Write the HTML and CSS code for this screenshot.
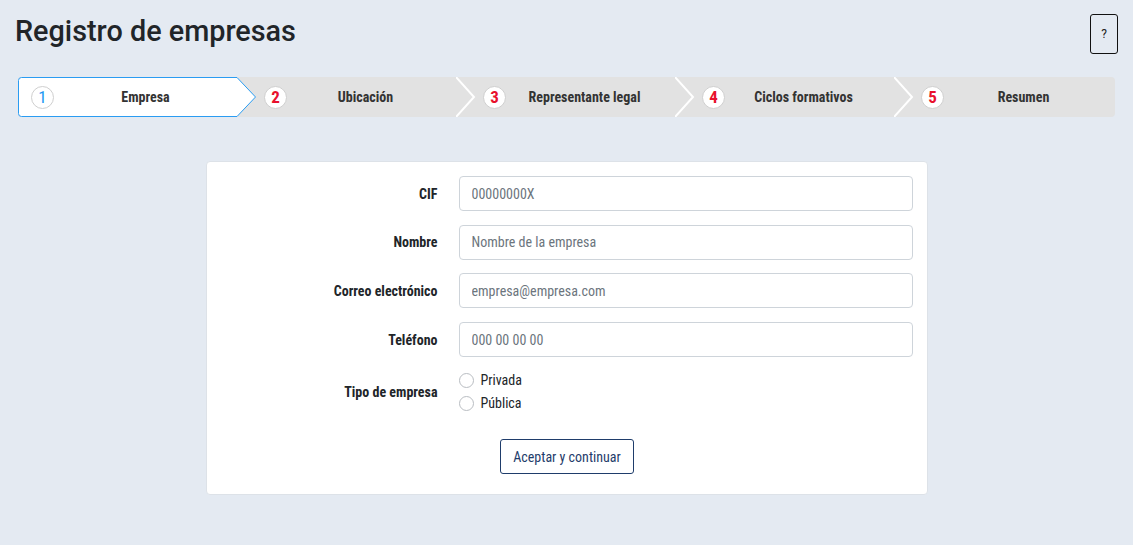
FILE: index.html
```html
<!DOCTYPE html>
<html lang="es">
<head>
<meta charset="utf-8">
<title>Registro de empresas</title>
<link rel="stylesheet" href="styles.css">
</head>
<body>
<header class="page-header">
  <h1 class="title">Registro de empresas</h1>
  <button class="help-btn" type="button">?</button>
</header>

<ol class="steps">
  <li class="step step-active">
    <svg class="step-shape" width="240" height="40" aria-hidden="true"><path d="M3.5 0.5 H219 L237.5 20 L219 39.5 H3.5 Q0.5 39.5 0.5 36.5 V3.5 Q0.5 0.5 3.5 0.5 Z" fill="#fff" stroke="#2a9cf2" stroke-width="1"/></svg>
    <span class="num">1</span><span class="step-label">Empresa</span>
  </li>
  <li class="step">
    <span class="num">2</span><span class="step-label">Ubicación</span>
    <svg class="chev" width="20" height="40" aria-hidden="true"><polyline points="0,0 18,20 0,40" fill="none" stroke="#fff" stroke-width="2"/></svg>
  </li>
  <li class="step">
    <span class="num">3</span><span class="step-label">Representante legal</span>
    <svg class="chev" width="20" height="40" aria-hidden="true"><polyline points="0,0 18,20 0,40" fill="none" stroke="#fff" stroke-width="2"/></svg>
  </li>
  <li class="step">
    <span class="num">4</span><span class="step-label">Ciclos formativos</span>
    <svg class="chev" width="20" height="40" aria-hidden="true"><polyline points="0,0 18,20 0,40" fill="none" stroke="#fff" stroke-width="2"/></svg>
  </li>
  <li class="step step-last">
    <span class="num">5</span><span class="step-label">Resumen</span>
  </li>
</ol>

<main class="card">
  <form class="form">
    <label class="f-label" for="cif">CIF</label>
    <input class="f-input" id="cif" type="text" placeholder="00000000X">

    <label class="f-label" for="nombre">Nombre</label>
    <input class="f-input" id="nombre" type="text" placeholder="Nombre de la empresa">

    <label class="f-label" for="correo">Correo electrónico</label>
    <input class="f-input" id="correo" type="email" placeholder="empresa@empresa.com">

    <label class="f-label" for="tel">Teléfono</label>
    <input class="f-input" id="tel" type="text" placeholder="000 00 00 00">

    <span class="f-label">Tipo de empresa</span>
    <div class="radios">
      <label class="radio"><span class="radio-dot"></span>Privada</label>
      <label class="radio"><span class="radio-dot"></span>Pública</label>
    </div>

    <div class="actions">
      <button class="btn" type="button">Aceptar y continuar</button>
    </div>
  </form>
</main>
</body>
</html>
```

FILE: styles.css
```css
* { box-sizing: border-box; }

html, body {
  margin: 0;
  padding: 0;
  background: #e4eaf2;
}

body {
  font-family: Roboto, "Liberation Sans", sans-serif;
  color: #212529;
  font-stretch: condensed;
}

.page-header {
  display: flex;
  justify-content: space-between;
  align-items: flex-start;
  padding: 14px 15px 0 15px;
}

.title {
  margin: 0;
  font-size: 28.8px;
  line-height: 35px;
  font-weight: 500;
  font-stretch: normal;
  color: #212529;
}

.help-btn {
  width: 28px;
  height: 40px;
  padding: 0;
  border: 1px solid #111;
  border-radius: 3px;
  background: #e4eaf2;
  font-family: Roboto, sans-serif;
  font-size: 12px;
  color: #222;
}

.steps {
  list-style: none;
  display: flex;
  margin: 23px 18px 0 18px;
  padding: 0;
  height: 40px;
  background: #e2e2e2;
  border-radius: 4px;
}

.step {
  position: relative;
  width: 219px;
  flex: none;
  display: flex;
  align-items: center;
  padding-left: 27px;
  padding-right: 12px;
}

.step-last { flex: 1; width: auto; }

.step-active {
  padding-left: 13px;
  padding-right: 0;
  z-index: 2;
}

.step-shape {
  position: absolute;
  left: 0;
  top: 0;
  overflow: visible;
}

.chev {
  position: absolute;
  left: 219px;
  top: 0;
  z-index: 1;
}

.num {
  position: relative;
  flex: none;
  width: 23px;
  height: 23px;
  border-radius: 50%;
  background: #fff;
  border: 1px solid #cfcfcf;
  display: flex;
  align-items: center;
  justify-content: center;
  font-size: 17px;
  font-weight: 700;
  color: #e8112d;
  line-height: 1;
}

.step-active .num {
  color: #2196f3;
  font-weight: 400;
}

.step-label {
  position: relative;
  flex: 1;
  text-align: center;
  font-size: 14px;
  font-weight: 700;
  color: #333;
}

.card {
  width: 722px;
  margin: 44px auto 0 auto;
  background: #fff;
  border: 1px solid #dde2e8;
  border-radius: 4px;
  padding: 14px 14px 20px 15px;
}

.form {
  display: grid;
  grid-template-columns: 216px 1fr;
  column-gap: 21px;
  row-gap: 13.7px;
  align-items: center;
}

.f-label {
  text-align: right;
  font-size: 14px;
  font-weight: 700;
  color: #212529;
}

.f-input {
  height: 35px;
  border: 1px solid #ced4da;
  border-radius: 4px;
  padding: 0 12px;
  font-family: Roboto, sans-serif;
  font-stretch: condensed;
  font-size: 14px;
  color: #212529;
  background: #fff;
}

.f-input::placeholder { color: #6c757d; }

.radios {
  display: flex;
  flex-direction: column;
  gap: 4px;
}

.radio {
  display: flex;
  align-items: center;
  gap: 7px;
  font-size: 14px;
  color: #212529;
  height: 19px;
}

.radio-dot {
  width: 15px;
  height: 15px;
  border: 1px solid #b9bdc2;
  border-radius: 50%;
  background: #fff;
}

.actions {
  grid-column: 1 / -1;
  display: flex;
  justify-content: center;
  margin-top: 13px;
}

.btn {
  height: 35px;
  padding: 0 12px;
  background: #fff;
  border: 1px solid #1f3d6b;
  border-radius: 3px;
  font-family: Roboto, sans-serif;
  font-stretch: condensed;
  font-size: 14px;
  color: #1f3d6b;
}
```
